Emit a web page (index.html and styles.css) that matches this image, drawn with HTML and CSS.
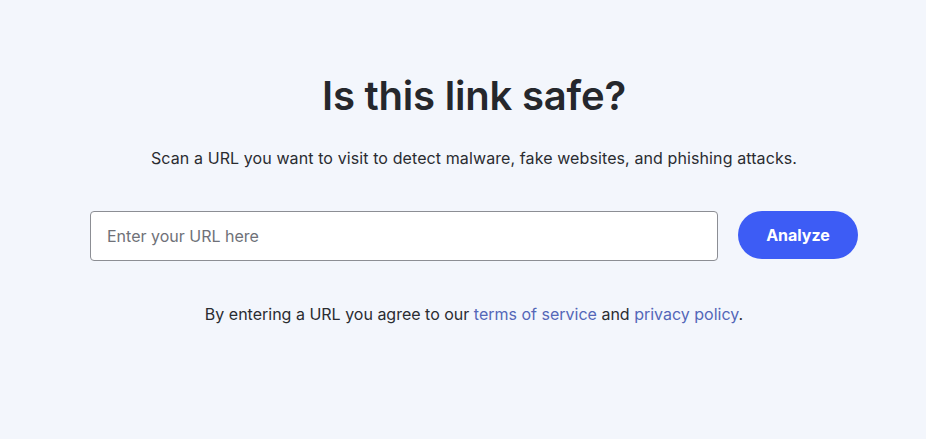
FILE: index.html
```html
<!DOCTYPE html>
<html lang="en">
<head>
<meta charset="utf-8">
<title>Is this link safe?</title>
<link rel="stylesheet" href="styles.css">
</head>
<body>
<main class="checker">
  <h1 class="checker__title">Is this link safe?</h1>
  <p class="checker__lead">Scan a URL you want to visit to detect malware, fake websites, and phishing attacks.</p>
  <form class="checker__form">
    <input class="checker__input" type="text" placeholder="Enter your URL here">
    <button class="checker__button" type="button">Analyze</button>
  </form>
  <p class="checker__note">By entering a URL you agree to our <a class="checker__link" href="#">terms of service</a> and <a class="checker__link" href="#">privacy policy</a>.</p>
</main>
</body>
</html>
```
FILE: styles.css
```css
html, body {
  margin: 0;
  padding: 0;
  height: 100%;
}
body {
  background: #f3f6fc;
  font-family: Inter, "Noto Sans", sans-serif;
  color: #2a2c31;
}
.checker {
  width: 768px;
  margin-left: 90px;
  padding-top: 72px;
  display: flex;
  flex-direction: column;
  align-items: center;
}
.checker__title {
  margin: 0;
  font-size: 40px;
  font-weight: 600;
  line-height: 48px;
  letter-spacing: -0.2px;
  color: #25272c;
}
.checker__lead {
  margin: 26px 0 0;
  font-size: 16px;
  line-height: 24px;
  letter-spacing: 0.1px;
  color: #2a2c31;
}
.checker__form {
  margin-top: 41px;
  width: 100%;
  display: flex;
  align-items: flex-start;
  gap: 20px;
}
.checker__input {
  flex: 1;
  box-sizing: border-box;
  height: 50px;
  border: 1px solid #8c8e94;
  border-radius: 4px;
  background: #ffffff;
  padding: 0 16px;
  font-family: inherit;
  font-size: 16px;
  color: #2a2c31;
  outline: none;
}
.checker__input::placeholder {
  color: #6f7178;
}
.checker__button {
  width: 120px;
  height: 48px;
  border: none;
  border-radius: 24px;
  background: #3d5cf5;
  color: #ffffff;
  font-family: inherit;
  font-size: 16px;
  font-weight: 700;
  cursor: pointer;
}
.checker__note {
  margin: 41px 0 0;
  font-size: 16px;
  line-height: 24px;
  color: #2a2c31;
}
.checker__link {
  color: #5467b8;
  text-decoration: none;
}
```
